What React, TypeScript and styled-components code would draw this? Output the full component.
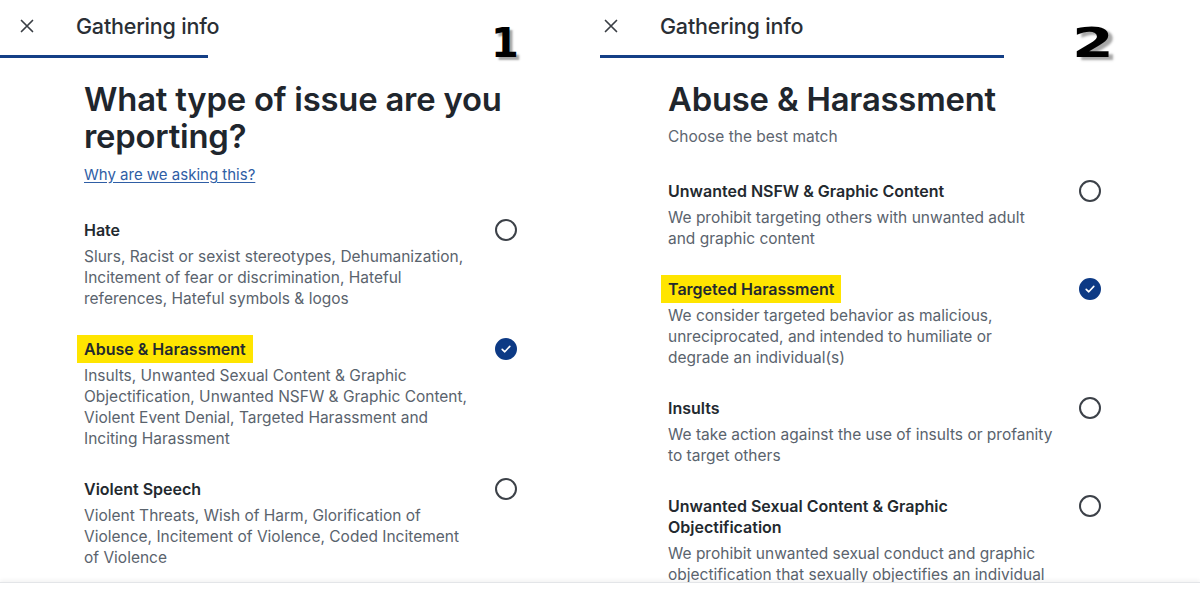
import React from 'react';
import styled, { createGlobalStyle } from 'styled-components';

const GlobalStyle = createGlobalStyle`
  html, body {
    margin: 0;
    padding: 0;
    background: #ffffff;
  }
  body {
    font-family: Inter, "Liberation Sans", sans-serif;
    color: #1f252b;
  }
`;

type Option = {
  title: string;
  text: string;
  checked?: boolean;
  marked?: boolean;
};

// line breaks follow the way the copy wraps in the report dialog
const leftOptions: Option[] = [
  {
    title: 'Hate',
    text: 'Slurs, Racist or sexist stereotypes, Dehumanization,\nIncitement of fear or discrimination, Hateful\nreferences, Hateful symbols & logos',
  },
  {
    title: 'Abuse & Harassment',
    text: 'Insults, Unwanted Sexual Content & Graphic\nObjectification, Unwanted NSFW & Graphic Content,\nViolent Event Denial, Targeted Harassment and\nInciting Harassment',
    checked: true,
    marked: true,
  },
  {
    title: 'Violent Speech',
    text: 'Violent Threats, Wish of Harm, Glorification of\nViolence, Incitement of Violence, Coded Incitement\nof Violence',
  },
];

const rightOptions: Option[] = [
  {
    title: 'Unwanted NSFW & Graphic Content',
    text: 'We prohibit targeting others with unwanted adult\nand graphic content',
  },
  {
    title: 'Targeted Harassment',
    text: 'We consider targeted behavior as malicious,\nunreciprocated, and intended to humiliate or\ndegrade an individual(s)',
    checked: true,
    marked: true,
  },
  {
    title: 'Insults',
    text: 'We take action against the use of insults or profanity\nto target others',
  },
  {
    title: 'Unwanted Sexual Content & Graphic\nObjectification',
    text: 'We prohibit unwanted sexual conduct and graphic\nobjectification that sexually objectifies an individual\nwithout their consent',
  },
];

const Page = styled.div`
  width: 1200px;
  height: 600px;
  display: flex;
  flex-direction: column;
  overflow: hidden;
`;

const Panels = styled.div`
  display: flex;
  height: 582px;
  flex-shrink: 0;
  overflow: hidden;
`;

const Footer = styled.div`
  flex: 1;
  background: #ffffff;
  border-top: 1px solid #e3e5e8;
  box-shadow: 0 -2px 4px rgba(0, 0, 0, 0.05);
  position: relative;
  z-index: 1;
`;

const Panel = styled.section`
  width: 600px;
  position: relative;
  display: flex;
  flex-direction: column;
  overflow: hidden;
`;

const Header = styled.div<{ $shift: number }>`
  height: 55px;
  flex-shrink: 0;
  box-sizing: border-box;
  padding-bottom: 4px;
  display: flex;
  align-items: center;
  padding-left: ${(p) => 4 + p.$shift}px;
`;

const CloseButton = styled.button`
  width: 14px;
  height: 14px;
  padding: 0;
  border: none;
  background: transparent;
  display: flex;
  color: #3a3f45;
`;

const HeaderTitle = styled.span`
  margin-left: 42px;
  font-size: 21.5px;
  font-weight: 500;
  color: #2a2f35;
  letter-spacing: -0.2px;
`;

const Progress = styled.div<{ $width: number }>`
  height: 3px;
  flex-shrink: 0;
  width: ${(p) => p.$width}px;
  background: #143f86;
`;

const Content = styled.div<{ $shift: number }>`
  flex-shrink: 0;
  padding: 23px 0 0 ${(p) => 68 + p.$shift}px;
  width: 433px;
`;

const Heading = styled.h1`
  margin: 0;
  font-size: 32.8px;
  line-height: 37px;
  font-weight: 600;
  color: #1f262d;
  letter-spacing: -0.2px;
`;

const WhyLink = styled.a`
  display: inline-block;
  margin-top: 10px;
  font-size: 15px;
  line-height: 20px;
  color: #2f5ea5;
  text-decoration: underline;
  text-underline-offset: 2px;
`;

const Subtitle = styled.p`
  margin: 9px 0 0;
  font-size: 15.5px;
  line-height: 20px;
  color: #5e6670;
`;

const OptionList = styled.div<{ $top: number }>`
  margin-top: ${(p) => p.$top}px;
  display: flex;
  flex-direction: column;
  gap: 30px;
`;

const OptionRow = styled.div`
  display: grid;
  grid-template-columns: 1fr 22px;
  align-items: start;
`;

const OptionTitle = styled.div`
  font-size: 16px;
  line-height: 21px;
  font-weight: 600;
  color: #23292f;
  white-space: pre-line;
`;

const Mark = styled.span<{ $on?: boolean }>`
  background: ${(p) => (p.$on ? '#ffe500' : 'transparent')};
  padding: 4px 7px;
  margin-left: -7px;
  -webkit-box-decoration-break: clone;
  box-decoration-break: clone;
`;

const OptionText = styled.div`
  margin-top: 5px;
  font-size: 15.5px;
  line-height: 21px;
  color: #5a636d;
  white-space: pre-line;
`;

const Radio = styled.span<{ $checked?: boolean }>`
  width: 22px;
  height: 22px;
  margin-top: -1px;
  box-sizing: border-box;
  border-radius: 50%;
  border: 2px solid ${(p) => (p.$checked ? '#0d3a85' : '#3c4148')};
  background: ${(p) => (p.$checked ? '#0d3a85' : 'transparent')};
  display: flex;
  align-items: center;
  justify-content: center;
`;

const StepBadge = styled.span<{ $left: number; $stretch: number }>`
  position: absolute;
  top: 19px;
  left: ${(p) => p.$left}px;
  font-family: "DejaVu Sans", sans-serif;
  font-weight: 900;
  font-size: 40px;
  line-height: 48px;
  color: #000000;
  text-shadow: 3px 3px 2px rgba(0, 0, 0, 0.35);
  transform: scaleX(${(p) => p.$stretch});
  transform-origin: left center;
`;

const CloseIcon = () => (
  <svg width="14" height="14" viewBox="0 0 14 14" fill="none">
    <path d="M1.5 1.5L12.5 12.5M12.5 1.5L1.5 12.5" stroke="currentColor" strokeWidth="1.7" strokeLinecap="round" />
  </svg>
);

const CheckIcon = () => (
  <svg width="12" height="12" viewBox="0 0 12 12" fill="none">
    <path d="M2.2 6.3L4.8 8.8L9.8 3.4" stroke="#ffffff" strokeWidth="1.6" strokeLinecap="round" strokeLinejoin="round" />
  </svg>
);

const OptionItem = ({ option }: { option: Option }) => (
  <OptionRow>
    <div>
      <OptionTitle>
        <Mark $on={option.marked}>{option.title}</Mark>
      </OptionTitle>
      <OptionText>{option.text}</OptionText>
    </div>
    <Radio $checked={option.checked}>{option.checked && <CheckIcon />}</Radio>
  </OptionRow>
);

const App = () => {
  return (
    <Page>
      <GlobalStyle />
      <Panels>
        <Panel>
          <Header $shift={16}>
            <CloseButton aria-label="Close">
              <CloseIcon />
            </CloseButton>
            <HeaderTitle>Gathering info</HeaderTitle>
          </Header>
          <Progress $width={208} />
          <Content $shift={16}>
            <Heading>What type of issue are you reporting?</Heading>
            <WhyLink href="#">Why are we asking this?</WhyLink>
            <OptionList $top={35}>
              {leftOptions.map((o) => (
                <OptionItem key={o.title} option={o} />
              ))}
            </OptionList>
          </Content>
          <StepBadge $left={491} $stretch={1}>1</StepBadge>
        </Panel>

        <Panel>
          <Header $shift={0}>
            <CloseButton aria-label="Close">
              <CloseIcon />
            </CloseButton>
            <HeaderTitle>Gathering info</HeaderTitle>
          </Header>
          <Progress $width={404} />
          <Content $shift={0}>
            <Heading>Abuse &amp; Harassment</Heading>
            <Subtitle>Choose the best match</Subtitle>
            <OptionList $top={34}>
              {rightOptions.map((o) => (
                <OptionItem key={o.title} option={o} />
              ))}
            </OptionList>
          </Content>
          <StepBadge $left={472} $stretch={1.5}>2</StepBadge>
        </Panel>
      </Panels>
      <Footer />
    </Page>
  );
};

export default App;
